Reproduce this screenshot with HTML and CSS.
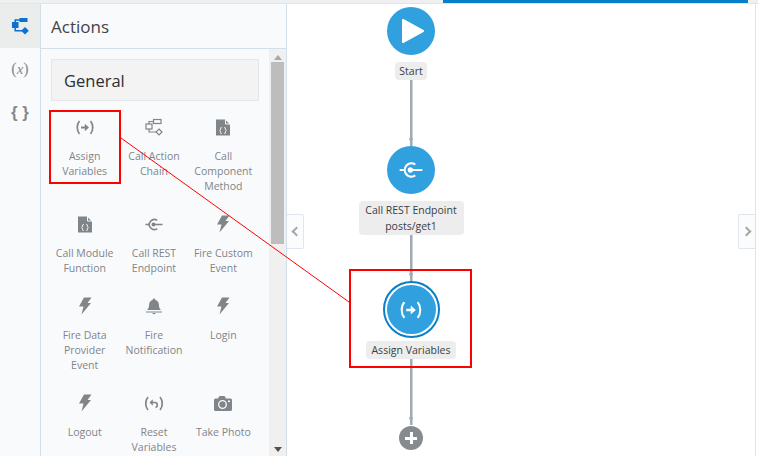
FILE: index.html
```html
<!DOCTYPE html>
<html lang="en">
<head>
<meta charset="utf-8">
<title>Action Chain</title>
<link rel="stylesheet" href="styles.css">
</head>
<body>
<svg width="0" height="0" class="defs">
  <defs>
    <symbol id="i-assign" viewBox="0 0 20 16">
      <path d="M4.500 1.500C1.500 5 1.500 11 4.500 14.500M15.500 1.500c3 3.500 3 9.500 0 13" fill="none" stroke="currentColor" stroke-width="1.700"/>
      <path d="M6 7h3.800V4.200L14 8 9.800 11.800V9H6z" fill="currentColor"/>
    </symbol>
    <symbol id="i-reset" viewBox="0 0 20 16">
      <path d="M4 1.500C1 5 1 11 4 14.500M16 1.500c3 3.500 3 9.500 0 13" fill="none" stroke="currentColor" stroke-width="1.700"/>
      <path d="M8 7h3c3 0 3 4.500 .5 5" fill="none" stroke="currentColor" stroke-width="1.600"/>
      <path d="M8.800 3.800v6.500L5.500 7z" fill="currentColor"/>
    </symbol>
    <symbol id="i-chain" viewBox="0 0 18 18">
      <g fill="none" stroke="currentColor" stroke-width="1.200">
        <rect x="8.500" y="1" width="7.500" height="4"/>
        <rect x="1" y="5.500" width="6" height="5"/>
        <path d="M8.500 3H4v2.500M4 10.500V13.500h7"/>
        <path d="M14 10.500l3 3-3 3-3-3z"/>
      </g>
    </symbol>
    <symbol id="i-chain-solid" viewBox="0 0 18 18">
      <g fill="currentColor">
        <rect x="8.500" y="1" width="8" height="4"/>
        <rect x="1" y="5" width="6.500" height="6"/>
        <path d="M14 10l3.800 3.800-3.800 3.800-3.800-3.800z"/>
      </g>
      <path d="M9 3H4.200v3M4.200 10v3.800h7" fill="none" stroke="currentColor" stroke-width="1.500"/>
    </symbol>
    <symbol id="i-doc" viewBox="0 0 14 16">
      <path d="M0 0h9l5 5v11H0z" fill="currentColor"/>
      <path d="M9.500 0v4.500H14" fill="none" stroke="#f9fafc" stroke-width="1"/>
      <path d="M5.500 7.500C4 9 5 10.200 3.800 11 5 11.800 4 13 5.500 14.500M8.500 7.500C10 9 9 10.200 10.200 11 9 11.800 10 13 8.500 14.500" fill="none" stroke="#f9fafc" stroke-width="1"/>
    </symbol>
    <symbol id="i-rest" viewBox="0 0 18 12">
      <path d="M.5 6h3.500M8.500 6h9" stroke="currentColor" stroke-width="1.400" fill="none"/>
      <path d="M12.200 1.900A5 5 0 1 0 12.200 10.100" fill="none" stroke="currentColor" stroke-width="1.600"/>
      <circle cx="8.500" cy="6" r="2" fill="currentColor"/>
    </symbol>
    <symbol id="i-bolt" viewBox="0 0 14 18">
      <path d="M6 0h7.500L9.500 5.500H13L3.500 17 5.500 9H1z" fill="currentColor"/>
    </symbol>
    <symbol id="i-bell" viewBox="0 0 16 16">
      <path d="M8 0c.8 0 1.200.5 1.200 1.200C12 2 13 4.500 13 7c0 2 .8 3.300 1.800 4.500H1.200C2.200 10.300 3 9 3 7c0-2.500 1-5 3.800-5.800C6.800.5 7.200 0 8 0z" fill="currentColor"/>
      <path d="M0 13h16v1H0zM6 14.500h4L8 16z" fill="currentColor"/>
    </symbol>
    <symbol id="i-camera" viewBox="0 0 18 15">
      <path d="M1.500 2.500H4L5.500 0h5L12 2.500h4.500A1.500 1.500 0 0 1 18 4v9.500a1.500 1.500 0 0 1-1.500 1.500h-15A1.500 1.500 0 0 1 0 13.500V4a1.500 1.500 0 0 1 1.500-1.500z" fill="currentColor"/>
      <circle cx="8.500" cy="8.500" r="3.800" fill="none" stroke="#f9fafc" stroke-width="1.300"/>
      <rect x="14" y="4.500" width="2" height="1.500" fill="#f9fafc"/>
    </symbol>
  </defs>
</svg>

<div class="app">
  <div class="topbar"><div class="progress"></div></div>
  <div class="main">
    <nav class="rail">
      <div class="rail-tab is-active"><svg class="rail-chain"><use href="#i-chain-solid"/></svg></div>
      <div class="rail-tab rail-x"><span class="paren">(</span><i>x</i><span class="paren">)</span></div>
      <div class="rail-tab rail-braces">{ }</div>
    </nav>

    <aside class="panel">
      <header class="panel-head">Actions</header>
      <div class="panel-body">
        <div class="palette">
          <h2 class="section">General</h2>
          <div class="grid">
            <div class="item"><svg class="ic ic-paren"><use href="#i-assign"/></svg><span>Assign Variables</span></div>
            <div class="item"><svg class="ic ic-chain"><use href="#i-chain"/></svg><span>Call Action Chain</span></div>
            <div class="item"><svg class="ic ic-doc"><use href="#i-doc"/></svg><span>Call Component Method</span></div>
            <div class="item"><svg class="ic ic-doc"><use href="#i-doc"/></svg><span>Call Module Function</span></div>
            <div class="item"><svg class="ic ic-rest"><use href="#i-rest"/></svg><span>Call REST Endpoint</span></div>
            <div class="item"><svg class="ic ic-bolt"><use href="#i-bolt"/></svg><span>Fire Custom Event</span></div>
            <div class="item"><svg class="ic ic-bolt"><use href="#i-bolt"/></svg><span>Fire Data Provider Event</span></div>
            <div class="item"><svg class="ic ic-bell"><use href="#i-bell"/></svg><span>Fire Notification</span></div>
            <div class="item"><svg class="ic ic-bolt"><use href="#i-bolt"/></svg><span>Login</span></div>
            <div class="item"><svg class="ic ic-bolt"><use href="#i-bolt"/></svg><span>Logout</span></div>
            <div class="item"><svg class="ic ic-paren"><use href="#i-reset"/></svg><span>Reset Variables</span></div>
            <div class="item"><svg class="ic ic-camera"><use href="#i-camera"/></svg><span>Take Photo</span></div>
          </div>
        </div>
        <div class="scrollbar">
          <div class="sb-up"></div>
          <div class="sb-thumb"></div>
          <div class="sb-down"></div>
        </div>
      </div>
    </aside>

    <section class="canvas">
      <div class="flow">
        <div class="node node-start">
          <svg viewBox="0 0 24 26" class="play"><path d="M2 2l20 11L2 24z" fill="#fff" stroke="#fff" stroke-width="2" stroke-linejoin="round"/></svg>
        </div>
        <div class="label label-start">Start</div>
        <div class="edge edge-a"></div>
        <div class="node node-rest"><svg class="rest-white"><use href="#i-rest"/></svg></div>
        <div class="label label-two">Call REST Endpoint<br>posts/get1</div>
        <div class="edge edge-b"></div>
        <div class="ring"><div class="node node-assign"><svg class="assign-white"><use href="#i-assign"/></svg></div></div>
        <div class="label label-assign">Assign Variables</div>
        <div class="edge edge-c"></div>
        <div class="add"></div>
      </div>
      <div class="toggle toggle-left"></div>
      <div class="toggle toggle-right"></div>
    </section>
    <div class="edge-strip"></div>
  </div>
</div>

<div class="callout callout-palette"></div>
<div class="callout callout-node"></div>
<svg class="callout-line" width="758" height="456"><line x1="121" y1="138" x2="349" y2="302"/></svg>
</body>
</html>
```

FILE: styles.css
```css
* { box-sizing: border-box; }
html, body { margin: 0; height: 100%; overflow: hidden; background: #fff; }
body { font-family: "Open Sans", "Liberation Sans", sans-serif; color: #333; position: relative; }
.defs { position: absolute; }

.app { width: 758px; height: 456px; display: flex; flex-direction: column; }
.topbar { height: 4px; flex: none; background: #eef0f2; border-bottom: 1px solid #dfe4e9; padding-left: 443px; }
.progress { width: 305px; height: 3px; background: #0a7fc9; }
.main { flex: 1; display: flex; min-height: 0; }

.rail { width: 41px; flex: none; background: #f9fafc; border-right: 1px solid #d3dfe8; display: flex; flex-direction: column; }
.rail-tab { height: 44px; flex: none; display: flex; align-items: center; justify-content: center; color: #808a91; }
.rail-tab.is-active { background: #ebecec; color: #0a72cf; }
.rail-chain { width: 18px; height: 18px; }
.rail-x { font-family: "Liberation Serif", serif; font-size: 15px; padding-bottom: 2px; }
.rail-x .paren { font-size: 16px; }
.rail-braces { font-family: "Liberation Sans", sans-serif; font-size: 17px; font-weight: 700; padding-bottom: 2px; }

.panel { width: 246px; flex: none; background: #f9fafc; border-right: 1px solid #d3dfe8; display: flex; flex-direction: column; }
.panel-head { height: 45px; flex: none; padding: 1px 0 0 10px; display: flex; align-items: center; border-bottom: 1px solid #d3dfe8; font-size: 17px; color: #3f444a; }
.panel-body { flex: 1; display: flex; min-height: 0; overflow: hidden; }
.palette { width: 228px; flex: none; padding: 10px 10px 0 10px; }
.section { height: 42px; margin: 0; padding-left: 12px; display: flex; align-items: center; background: #f3f3f3; border: 1px solid #e6e6e6; font-size: 16.500px; font-weight: 400; color: #2b2f33; }
.grid { display: grid; grid-template-columns: repeat(3, 69.330px); margin: 0 0 0 -1px; padding-top: 16px; }
.item { display: flex; flex-direction: column; align-items: center; color: #7f8589; padding: 0 2px 20px; text-align: center; font-size: 10.500px; line-height: 15px; }
.item span { display: block; margin-top: 11px; }
.ic { color: #808589; display: block; height: 21px; flex: none; }
.ic-paren { width: 20px; }
.ic-chain { width: 18px; }
.ic-doc { width: 14px; }
.ic-rest { width: 18px; }
.ic-bolt { width: 14px; }
.ic-bell { width: 16px; }
.ic-camera { width: 18px; }

.scrollbar { width: 17px; flex: none; background: #f0f0f0; display: flex; flex-direction: column; align-items: center; position: relative; }
.sb-up { width: 0; height: 0; margin-top: 6px; border: 4px solid transparent; border-top: 0; border-bottom: 5px solid #a8a8a8; }
.sb-thumb { width: 13px; height: 182px; margin-top: 2px; background: #bdbdbd; }
.sb-down { width: 0; height: 0; position: absolute; bottom: 4px; border: 4px solid transparent; border-bottom: 0; border-top: 5px solid #505050; }

.canvas { flex: 1; background: #fff; position: relative; overflow: hidden; }
.edge-strip { width: 3px; flex: none; background: #fff; border-left: 1px solid #dfe4e9; }
.flow { width: 130px; margin-left: 59px; padding-top: 3px; display: flex; flex-direction: column; align-items: center; }
.node { width: 48px; height: 48px; border-radius: 50%; background: #30a0df; display: flex; align-items: center; justify-content: center; flex: none; }
.play { width: 24px; height: 26px; margin-left: 3px; }
.rest-white { width: 24px; height: 16px; color: #fff; }
.label { margin-top: 7px; padding: 0 5px; background: #ededed; border-radius: 4px; font-size: 10.500px; line-height: 18px; color: #3a3f44; text-align: center; flex: none; }
.label-start { padding: 0 4px; }
.label-two { line-height: 16px; padding: 1px 6px; width: 105px; white-space: nowrap; }
.label-assign { margin-top: 3px; }
.edge { width: 2px; background: #a0aab4; box-shadow: 1px 0 0 #ccd2d8; position: relative; flex: none; }
.edge::after { content: ""; position: absolute; left: -1.500px; bottom: 0; border: 2.500px solid transparent; border-bottom: 0; border-top: 8px solid #a3adb7; }
.edge-a { height: 66px; }
.edge-b { height: 46px; }
.edge-c { height: 66px; }
.ring { width: 57px; height: 57px; border-radius: 50%; border: 2px solid #0a7fc9; padding: 2px; background: #fff; flex: none; }
.ring .node { width: 49px; height: 49px; }
.assign-white { width: 24px; height: 20px; color: #fff; }
.add { width: 24px; height: 24px; border-radius: 50%; flex: none; background: #858b8f; position: relative; margin-top: 1px; }
.add::before { content: ""; position: absolute; left: 6px; top: 10.500px; width: 12px; height: 3px; background: #fff; }
.add::after { content: ""; position: absolute; left: 10.500px; top: 6px; width: 3px; height: 12px; background: #fff; }

.toggle { position: absolute; top: 210px; width: 17px; height: 35px; background: #fbfcfd; border: 1px solid #dfe6ee; display: flex; align-items: center; justify-content: center; }
.toggle::before { content: ""; width: 5px; height: 5px; border-top: 2px solid #a8a8a8; border-left: 2px solid #a8a8a8; }
.toggle-left { left: 0; border-left: 0; border-radius: 0 2px 2px 0; }
.toggle-left::before { transform: rotate(-45deg); margin-left: 2px; }
.toggle-right { right: 0; border-right: 0; border-radius: 2px 0 0 2px; }
.toggle-right::before { transform: rotate(135deg); margin-right: 2px; }

.callout { position: absolute; border: 2px solid #f00; }
.callout-palette { left: 49px; top: 110px; width: 72px; height: 74px; }
.callout-node { left: 349px; top: 269px; width: 123px; height: 99px; }
.callout-line { position: absolute; left: 0; top: 0; pointer-events: none; }
.callout-line line { stroke: #f00; stroke-width: 1; }
```
